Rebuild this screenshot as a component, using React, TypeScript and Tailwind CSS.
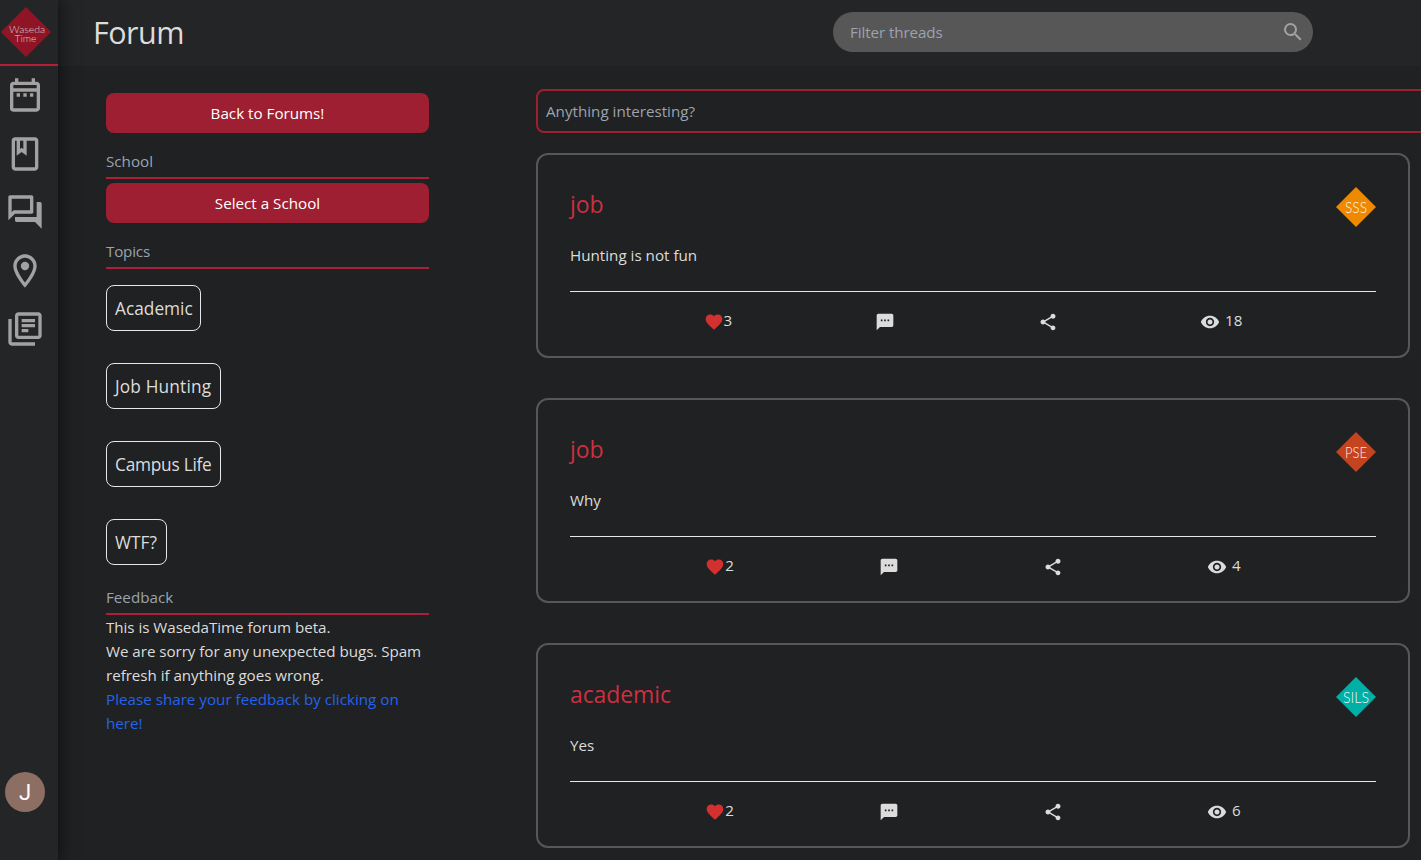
import type { ReactNode } from "react";
import {
  MdFavorite,
  MdOutlineClass,
  MdOutlineDateRange,
  MdOutlineForum,
  MdOutlineLibraryBooks,
  MdOutlineRoom,
  MdSearch,
  MdShare,
  MdTextsms,
  MdVisibility,
} from "react-icons/md";

type Thread = {
  title: string;
  body: string;
  likes: number;
  views: number;
  school: string;
  color: string;
};

const threads: Thread[] = [
  { title: "job", body: "Hunting is not fun", likes: 3, views: 18, school: "SSS", color: "#ef8a00" },
  { title: "job", body: "Why", likes: 2, views: 4, school: "PSE", color: "#c6431f" },
  { title: "academic", body: "Yes", likes: 2, views: 6, school: "SILS", color: "#00b0a6" },
];

const topics = [
  { label: "Academic", size: "w-[95px]" },
  { label: "Job Hunting", size: "w-[115px] tracking-[0.15px]" },
  { label: "Campus Life", size: "w-[115px] tracking-[-0.25px]" },
  { label: "WTF?", size: "w-[61px]" },
];

const navIcons = [MdOutlineDateRange, MdOutlineClass, MdOutlineForum, MdOutlineRoom, MdOutlineLibraryBooks];

function Logo() {
  return (
    <svg width="50" height="50" viewBox="0 0 50 50" className="mt-[7px] ml-[1px] block">
      <path d="M25 0 50 25 25 50 0 25Z" fill="#8f1425" />
      <g fill="#d9cfd0" fontFamily="Lato, sans-serif" fontSize="10.5" fontWeight="300" textAnchor="middle">
        <text x="26" y="26" textLength="36" lengthAdjust="spacingAndGlyphs">
          Waseda
        </text>
        <text x="24.5" y="35" textLength="22" lengthAdjust="spacingAndGlyphs">
          Time
        </text>
      </g>
    </svg>
  );
}

function Sidebar() {
  return (
    <aside className="z-10 flex h-full w-[58px] shrink-0 flex-col bg-[#242527] shadow-[0_0_16px_2px_rgba(0,0,0,0.55)]">
      <div className="h-[66px] border-b-2 border-[#b51e36]">
        <Logo />
      </div>
      <nav className="flex flex-col gap-[18.5px] pt-[9px] pl-[5px] text-[#a2a2a2]">
        {navIcons.map((Icon, i) => (
          <Icon key={i} size={40} />
        ))}
      </nav>
      <div className="mt-auto mb-12 ml-[5px] flex size-10 items-center justify-center rounded-full bg-[#8d6e63] pt-[2px] font-[Roboto] text-[22px] text-white">
        J
      </div>
    </aside>
  );
}

function Header() {
  return (
    <header className="flex h-[66px] shrink-0 items-center bg-[#242527] pl-[35px]">
      <h1 className="-mt-[2px] w-[740px] text-[30.5px] leading-10 tracking-[-0.5px] text-[#dcdcdc]">Forum</h1>
      <div className="-mt-[2px] flex h-10 w-[480px] items-center justify-between rounded-full bg-[#575757] pr-2 pl-[17px]">
        <span className="tracking-[-0.1px] text-[#9ca3af]">Filter threads</span>
        <MdSearch size={24} className="text-[#a2a2a2]" />
      </div>
    </header>
  );
}

function SectionTitle({ children }: { children: ReactNode }) {
  return <h2 className="h-[30px] border-b-2 border-[#a92038] text-[#9ca3af]">{children}</h2>;
}

function RedButton({ children }: { children: ReactNode }) {
  return (
    <button className="block h-10 w-full rounded-lg bg-[#9d1f31] text-center text-white">{children}</button>
  );
}

function Filters() {
  return (
    <section className="w-[323px] shrink-0 pt-[27px]">
      <RedButton>Back to Forums!</RedButton>
      <div className="mt-4 mb-1">
        <SectionTitle>School</SectionTitle>
      </div>
      <RedButton>Select a School</RedButton>
      <div className="mt-4 tracking-[-0.2px]">
        <SectionTitle>Topics</SectionTitle>
      </div>
      <div className="mt-4 flex flex-col items-start gap-8">
        {topics.map((t) => (
          <button
            key={t.label}
            className={`h-[46px] rounded-lg border border-[#e5e7eb] px-2 pt-[1px] text-left text-[17.3px] whitespace-nowrap text-[#dcdcdc] ${t.size}`}
          >
            {t.label}
          </button>
        ))}
      </div>
      <div className="mt-5">
        <SectionTitle>Feedback</SectionTitle>
      </div>
      <p className="tracking-[-0.05px] text-[#dcdcdc]">
        This is WasedaTime forum beta.
        <br />
        We are sorry for any unexpected bugs. Spam
        <br />
        refresh if anything goes wrong.
      </p>
      <a className="block text-[#2563eb]">
        Please share your feedback by clicking on
        <br />
        here!
      </a>
    </section>
  );
}

function SchoolBadge({ name, color }: { name: string; color: string }) {
  return (
    <svg width="40" height="40" viewBox="0 0 40 40" className="shrink-0">
      <path d="M20 0 40 20 20 40 0 20Z" fill={color} />
      <text
        x="20"
        y="25.5"
        fill="#fff"
        fillOpacity="0.95"
        fontFamily="Lato, sans-serif"
        fontWeight="300"
        fontSize="15.5"
        textAnchor="middle"
        textLength={name.length === 4 ? 26 : 22}
        lengthAdjust="spacingAndGlyphs"
      >
        {name}
      </text>
    </svg>
  );
}

function ThreadCard({ thread }: { thread: Thread }) {
  return (
    <article className="h-[205px] w-[874px] rounded-xl border-2 border-[#575757] px-8 pt-8">
      <div className="flex h-10 justify-between">
        <h3 className="text-[23px] leading-[34px] tracking-[-0.1px] text-[#ce2f40]">{thread.title}</h3>
        <SchoolBadge name={thread.school} color={thread.color} />
      </div>
      <p className="mt-4 h-12 text-[#dcdcdc]">{thread.body}</p>
      <div className="flex h-[57px] items-center justify-evenly gap-[9px] border-t border-[#e5e7eb] text-[#dcdcdc]">
        <span className="flex items-center">
          <MdFavorite size={20} className="mt-[3px]  text-[#d3302f]" />
          <span className="w-[9px]">{thread.likes}</span>
        </span>
        <MdTextsms size={20} className="mt-[3px]" />
        <MdShare size={20} className="mt-[3px]" />
        <span className="flex items-center gap-[5px]">
          <MdVisibility size={20} className="mt-[3px]" />
          {thread.views}
        </span>
      </div>
    </article>
  );
}

export default function App() {
  return (
    <div className="flex h-[860px] w-[1421px] overflow-hidden bg-[#1f2122] font-['Open_Sans','Noto_Sans',sans-serif] text-[15.2px] leading-6">
      <Sidebar />
      <div className="flex min-w-0 flex-1 flex-col">
        <Header />
        <main className="flex min-h-0 flex-1 gap-[107px] overflow-hidden pl-12">
          <Filters />
          <section className="shrink-0 pt-[23px]">
            <div className="flex h-11 w-[920px] items-center rounded-lg border-2 border-[#9d1f31] px-2 text-[#9ca3af]">
              Anything interesting?
            </div>
            <div className="mt-5 flex flex-col gap-10">
              {threads.map((t, i) => (
                <ThreadCard key={i} thread={t} />
              ))}
            </div>
          </section>
        </main>
      </div>
    </div>
  );
}
